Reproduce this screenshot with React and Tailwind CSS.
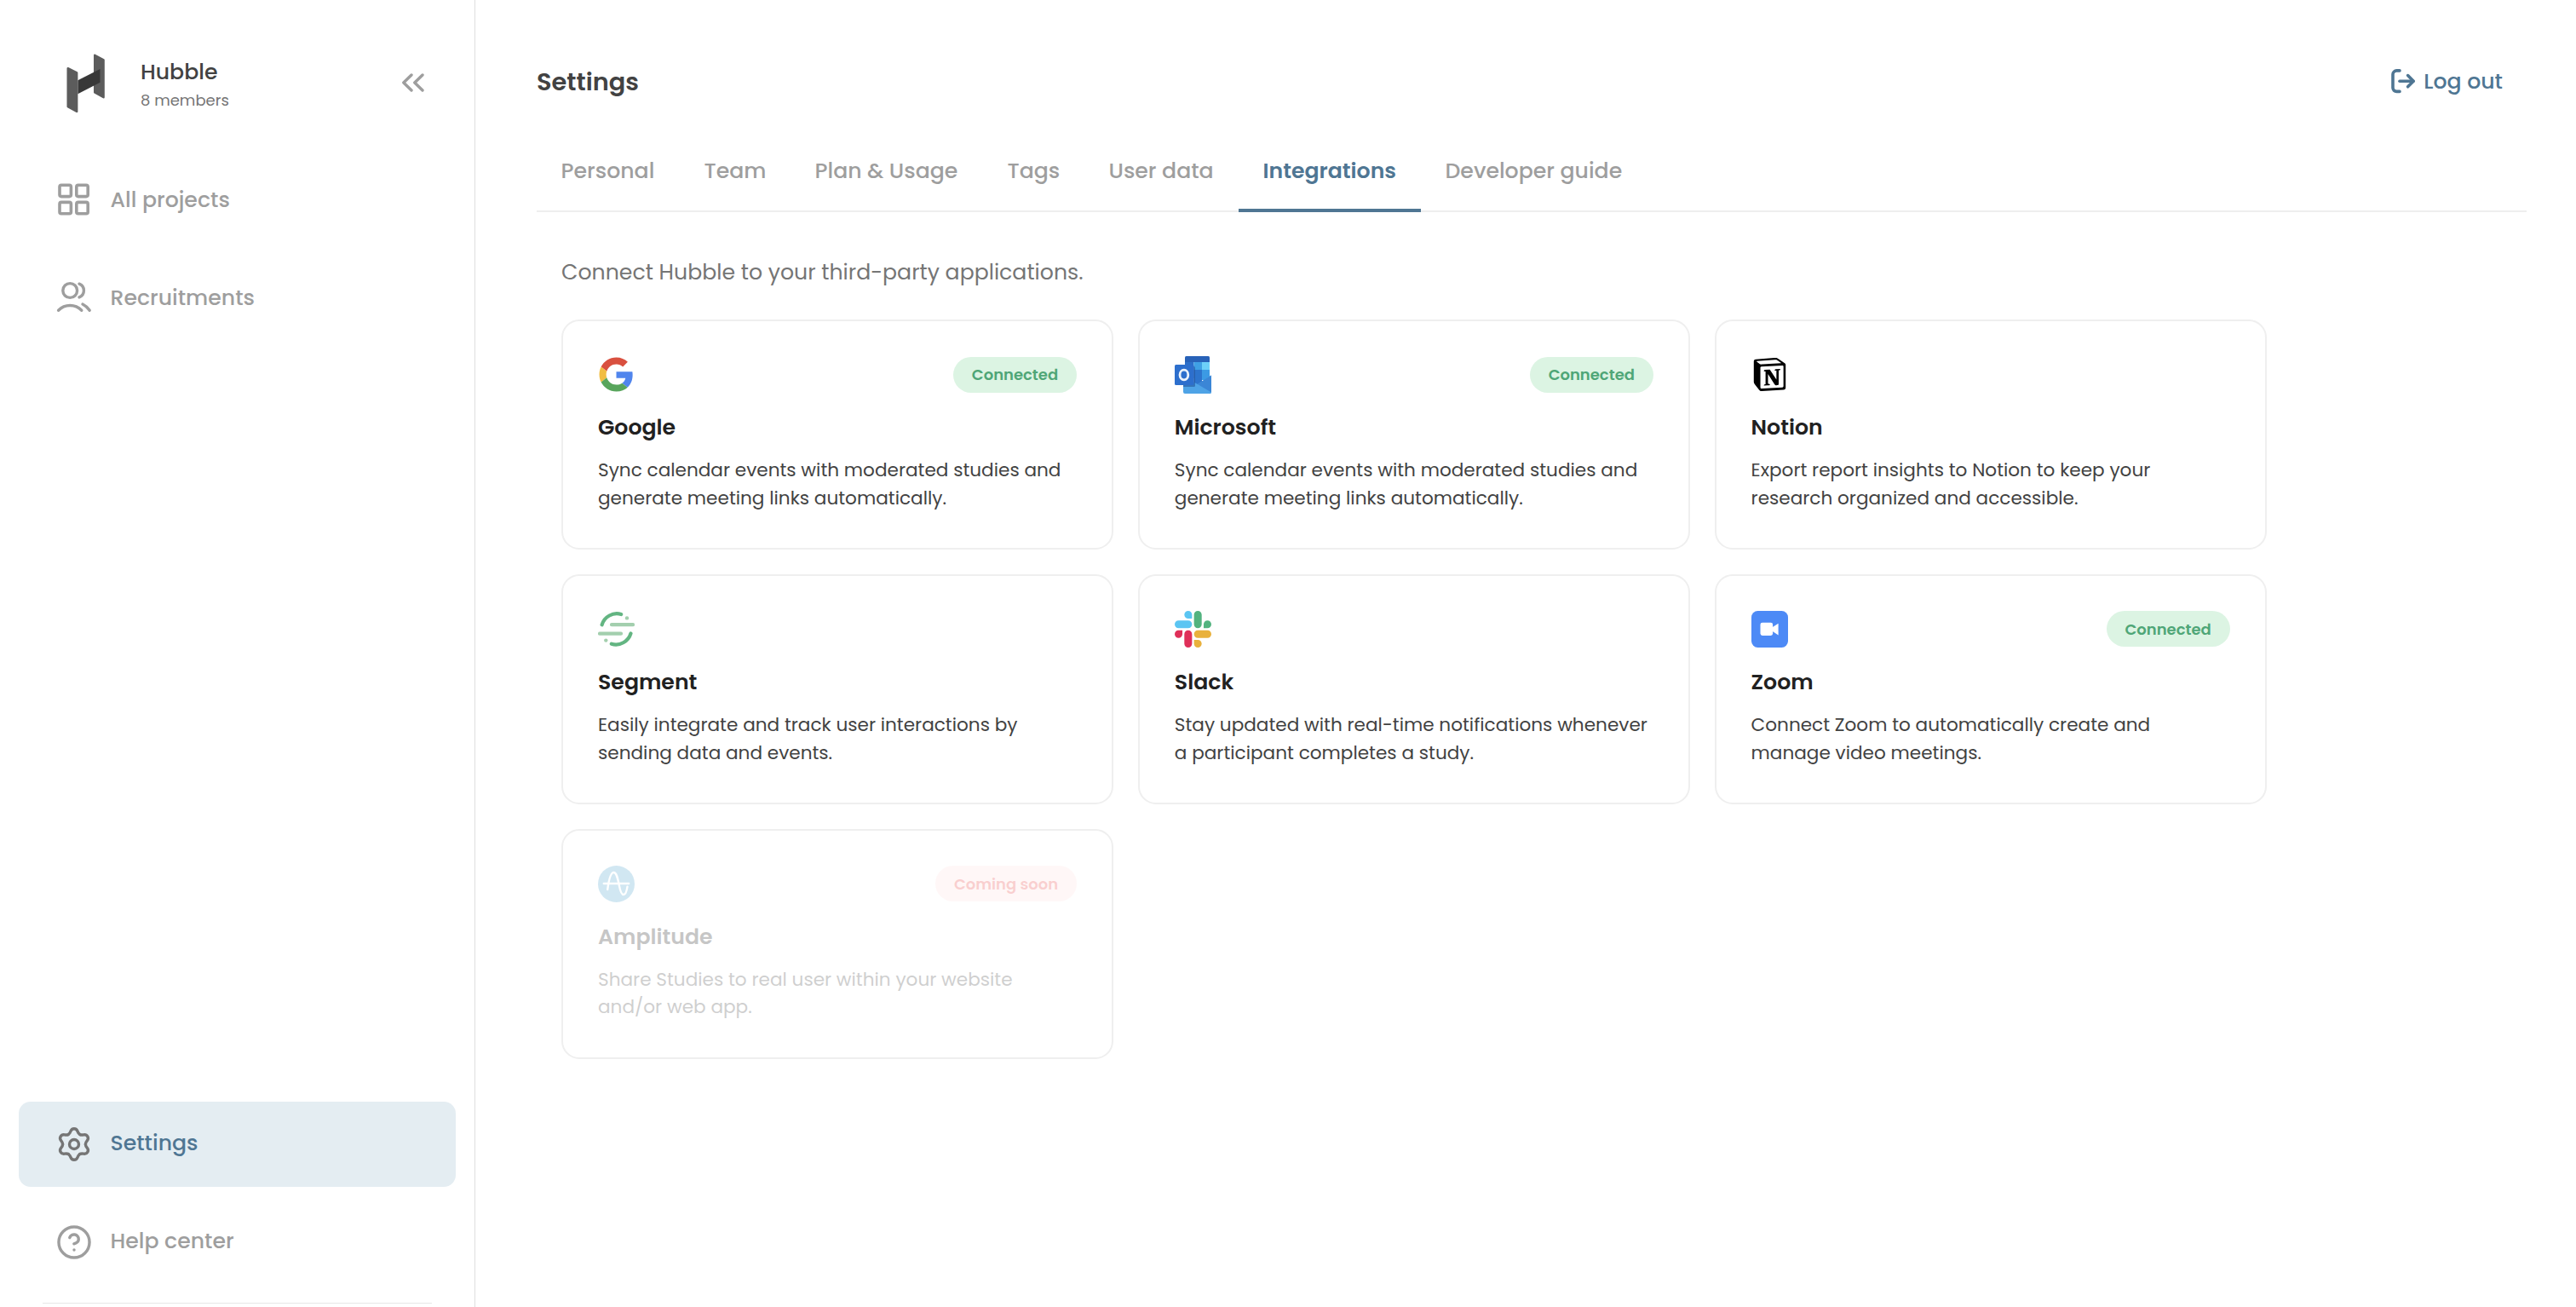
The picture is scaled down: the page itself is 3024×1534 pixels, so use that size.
import React, { useState } from "react";
import { SiNotion } from "react-icons/si";

const navItems = {
  top: [
    { name: "All projects", icon: ProjectsIcon },
    { name: "Recruitments", icon: PeopleIcon },
  ],
  bottom: [
    { name: "Settings", icon: GearIcon, active: true },
    { name: "Help center", icon: HelpIcon },
  ],
};

const tabs = [
  { name: "Personal", width: "w-[168px]" },
  { name: "Team", width: "w-[130px]" },
  { name: "Plan & Usage", width: "w-[226px]" },
  { name: "Tags", width: "w-[119px]" },
  { name: "User data", width: "w-[181px]" },
  { name: "Integrations", width: "w-[214px]" },
  { name: "Developer guide", width: "w-[266px]" },
];

const integrations = [
  {
    name: "Google",
    icon: GoogleLogo,
    status: "connected",
    text: "Sync calendar events with moderated studies and generate meeting links automatically.",
  },
  {
    name: "Microsoft",
    icon: OutlookLogo,
    status: "connected",
    text: "Sync calendar events with moderated studies and generate meeting links automatically.",
  },
  {
    name: "Notion",
    icon: NotionLogo,
    text: "Export report insights to Notion to keep your research organized and accessible.",
  },
  {
    name: "Segment",
    icon: SegmentLogo,
    text: "Easily integrate and track user interactions by sending data and events.",
  },
  {
    name: "Slack",
    icon: SlackLogo,
    text: "Stay updated with real-time notifications whenever a participant completes a study.",
  },
  {
    name: "Zoom",
    icon: ZoomLogo,
    status: "connected",
    text: "Connect Zoom to automatically create and manage video meetings.",
  },
  {
    name: "Amplitude",
    icon: AmplitudeLogo,
    status: "soon",
    text: "Share Studies to real user within your website and/or web app.",
  },
];

/* ---------- sidebar icons ---------- */

function HubbleLogo() {
  return (
    <svg width="46" height="70" viewBox="0 0 46 70" strokeLinejoin="round" strokeWidth="2.4">
      <path d="M33.2 1.7 43.6 7.2V51.2L33.2 45.4Z" fill="#5c5c5c" stroke="#5c5c5c" />
      <path d="M13.4 31.3 39.5 18V33.7L13.4 47.3Z" fill="#383838" />
      <path d="M1.7 17.2 12.2 22.4V67.9L1.7 62.2Z" fill="#5c5c5c" stroke="#5c5c5c" />
    </svg>
  );
}

function CollapseIcon() {
  return (
    <svg width="26" height="22" viewBox="0 0 26 22" fill="none" stroke="#9e9e9e" strokeWidth="3.4" strokeLinecap="round" strokeLinejoin="round">
      <path d="M11 2 1.8 11 11 20" />
      <path d="M24 2 14.8 11 24 20" />
    </svg>
  );
}

function ProjectsIcon() {
  return (
    <svg width="44" height="44" viewBox="0 0 44 44" fill="none" stroke="#9e9e9e" strokeWidth="3.6">
      <rect x="5" y="5.2" width="13.4" height="13.4" rx="2" />
      <rect x="24.8" y="5.2" width="13.4" height="13.4" rx="2" />
      <rect x="5" y="25.4" width="13.4" height="13.4" rx="2" />
      <rect x="24.8" y="25.4" width="13.4" height="13.4" rx="2" />
    </svg>
  );
}

function PeopleIcon() {
  return (
    <svg width="44" height="44" viewBox="0 0 44 44" fill="none" stroke="#9e9e9e" strokeWidth="3.4" strokeLinecap="round">
      <circle cx="17.2" cy="14" r="8.4" />
      <path d="M28 6.2a8.4 8.4 0 0 1 0 15.7" />
      <path d="M3.6 37.3a19 19 0 0 1 27.2 0" />
      <path d="M32 30a21 21 0 0 1 8.2 7.3" />
    </svg>
  );
}

function GearIcon() {
  return (
    <svg width="44" height="44" viewBox="-22 -22 44 44" fill="none" stroke="#757575" strokeWidth="3.4" strokeLinecap="round" strokeLinejoin="round">
      <circle r="5.5" />
      {[0, 60, 120, 180, 240, 300].map((deg) => (
        <path
          key={deg}
          transform={`rotate(${deg})`}
          d="M-6.7-11.6Q-5-12.6-4.1-15.2C-3.2-17.7-1.9-18.3 0-18.3S3.2-17.7 4.1-15.2Q5-12.6 6.7-11.6"
        />
      ))}
    </svg>
  );
}

function HelpIcon() {
  return (
    <svg width="44" height="44" viewBox="-0.2 -0.2 24.4 24.4" fill="none" stroke="#9e9e9e" strokeWidth="1.9" strokeLinecap="round" strokeLinejoin="round">
      <circle cx="12" cy="12" r="10" />
      <path d="M9.09 9a3 3 0 0 1 5.83 1c0 2-3 3-3 3" />
      <path d="M12 17h.01" />
    </svg>
  );
}

function LogoutIcon() {
  return (
    <svg width="29" height="29" viewBox="0 0 29 29" fill="none" stroke="#4f7693" strokeWidth="3.6" strokeLinecap="round" strokeLinejoin="round">
      <path d="M10 1.9H6.4A4.4 4.4 0 0 0 2 6.3V22a4.4 4.4 0 0 0 4.4 4.4H10" />
      <path d="M10 14.2H26" />
      <path d="M19.6 7.6 26.2 14.2 19.6 20.8" />
    </svg>
  );
}

/* ---------- integration logos ---------- */

function GoogleLogo() {
  return (
    <svg width="43" height="43" viewBox="-1.8 -1.8 51.6 51.6">
      <path fill="#d9503f" d="M24 9.5c3.54 0 6.71 1.22 9.21 3.6l6.85-6.85C35.9 2.38 30.47 0 24 0 14.62 0 6.51 5.38 2.56 13.22l7.98 6.19C12.43 13.72 17.74 9.5 24 9.5z" />
      <path fill="#5085ed" d="M46.98 24.55c0-1.57-.15-3.09-.38-4.55H24v9.02h12.94c-.58 2.96-2.26 5.48-4.78 7.18l7.73 6c4.51-4.18 7.09-10.36 7.09-17.65z" />
      <path fill="#f1bd42" d="M10.53 28.59c-.48-1.45-.76-2.99-.76-4.59s.27-3.14.76-4.59l-7.98-6.19C.92 16.46 0 20.12 0 24c0 3.88.92 7.54 2.56 10.78l7.97-6.19z" />
      <path fill="#58a55c" d="M24 48c6.48 0 11.93-2.13 15.89-5.81l-7.73-6c-2.15 1.45-4.92 2.3-8.16 2.3-6.26 0-11.57-4.22-13.47-9.91l-7.98 6.19C6.51 42.62 14.62 48 24 48z" />
    </svg>
  );
}

function OutlookLogo() {
  return (
    <svg width="43" height="44" viewBox="0 0 43 44">
      <path fill="#2862b8" d="M13.5 0h26A1.5 1.5 0 0 1 41 1.5V7H12V1.5A1.5 1.5 0 0 1 13.5 0Z" />
      <path fill="#2c6fc9" d="M12 7h10.5v19H12z" />
      <path fill="#3fa0e4" d="M22.5 7H32v9h-9.5z" />
      <path fill="#6dd0f8" d="M32 7h9v9h-9z" />
      <path fill="#2d74cd" d="M22.5 16H32v18h-9.5z" />
      <path fill="#3c9ae4" d="M32 16h9v12h-9z" />
      <path fill="#4ea3e6" d="M10 24 27 33 43 22.5V42.5A1.5 1.5 0 0 1 41.5 44H12a2 2 0 0 1-2-2Z" />
      <path fill="#3b86d6" d="M43 22.5V42.5L26.5 32.7Z" />
      <path fill="#1f4f93" opacity="0.55" d="M10 12h12.5a1.5 1.5 0 0 1 1.5 1.5V34.5a1.5 1.5 0 0 1-1.5 1.5H10z" />
      <rect y="10" width="22.5" height="24" rx="1.6" fill="#2d6fcd" />
      <ellipse cx="10.9" cy="22" rx="4.9" ry="5.8" fill="none" stroke="#eaf2fb" strokeWidth="2.8" />
    </svg>
  );
}

function NotionLogo() {
  return (
    <div className="pl-[2px]">
      <SiNotion className="size-[39px] text-black" />
    </div>
  );
}

function SegmentLogo() {
  return (
    <svg width="43" height="43" viewBox="0 0 43 43" fill="none" strokeLinecap="round" strokeWidth="4.2">
      <path d="M4.6 16.3A18.2 18.2 0 0 1 27.2 4" stroke="#63b582" />
      <path d="M38.5 26.4A18.2 18.2 0 0 1 15.8 38.7" stroke="#63b582" />
      <path d="M16 16.2H41M2 26.7H27" stroke="#a3cfae" />
      <circle cx="34" cy="8.4" r="2.2" fill="#a3cfae" />
      <circle cx="9.3" cy="34.6" r="2.2" fill="#a3cfae" />
    </svg>
  );
}

function SlackLogo() {
  return (
    <svg width="43" height="43" viewBox="0 0 122.8 122.8">
      <path fill="#df3059" d="M25.8 77.6c0 7.1-5.8 12.9-12.9 12.9S0 84.7 0 77.6s5.8-12.9 12.9-12.9h12.9v12.9zM32.3 77.6c0-7.1 5.8-12.9 12.9-12.9s12.9 5.8 12.9 12.9v32.3c0 7.1-5.8 12.9-12.9 12.9s-12.9-5.8-12.9-12.9V77.6z" />
      <path fill="#5bc5f2" d="M45.2 25.8c-7.1 0-12.9-5.8-12.9-12.9S38.1 0 45.2 0s12.9 5.8 12.9 12.9v12.9H45.2zM45.2 32.3c7.1 0 12.9 5.8 12.9 12.9s-5.8 12.9-12.9 12.9H12.9C5.8 58.1 0 52.3 0 45.2s5.8-12.9 12.9-12.9h32.3z" />
      <path fill="#52b37f" d="M97 45.2c0-7.1 5.8-12.9 12.9-12.9s12.9 5.8 12.9 12.9-5.8 12.9-12.9 12.9H97V45.2zM90.5 45.2c0 7.1-5.8 12.9-12.9 12.9s-12.9-5.8-12.9-12.9V12.9C64.7 5.8 70.5 0 77.6 0s12.9 5.8 12.9 12.9v32.3z" />
      <path fill="#e9b13c" d="M77.6 97c7.1 0 12.9 5.8 12.9 12.9s-5.8 12.9-12.9 12.9-12.9-5.8-12.9-12.9V97h12.9zM77.6 90.5c-7.1 0-12.9-5.8-12.9-12.9s5.8-12.9 12.9-12.9h32.3c7.1 0 12.9 5.8 12.9 12.9s-5.8 12.9-12.9 12.9H77.6z" />
    </svg>
  );
}

function ZoomLogo() {
  return (
    <svg width="43" height="43" viewBox="0 0 43 43">
      <rect width="43" height="43" rx="7.5" fill="#4d8af6" />
      <rect x="10.5" y="13.7" width="14.6" height="15.3" rx="2.4" fill="white" />
      <path d="M24.5 19.3 31.6 14.7V28.4L24.5 23.7Z" fill="white" />
    </svg>
  );
}

function AmplitudeLogo() {
  return (
    <svg width="43" height="43" viewBox="0 0 43 43" fill="none" stroke="white" strokeWidth="2.4" strokeLinecap="round">
      <circle cx="21.5" cy="21.5" r="21.5" fill="#4ba3cf" stroke="none" />
      <path d="M6.8 21H36.2" />
      <path d="M11.2 28C12.4 19 14.8 8 18.4 8C22.3 8 23.5 17 25 24C26 29 27.5 34 30 34C32.4 34 33.9 28.5 34.5 24.6" />
    </svg>
  );
}

/* ---------- pieces ---------- */

function NavItem({ item, labelClass = "" }) {
  const Icon = item.icon;
  return (
    <button
      className={`flex items-center gap-[20.5px] h-[100px] w-full pl-[43px] rounded-[14px] text-[25.2px] font-medium ${
        item.active ? "bg-[#e4edf2] text-[#4f7693]" : "text-[#9e9e9e]"
      }`}
    >
      <Icon />
      <span className={`whitespace-nowrap ${labelClass}`}>{item.name}</span>
    </button>
  );
}

function StatusBadge({ status }) {
  if (!status) return null;
  const connected = status === "connected";
  return (
    <span
      className={`flex items-center justify-center h-[42px] rounded-full text-[18px] font-semibold ${
        connected
          ? "w-[145px] bg-[#dcf4e3] text-[#4fa677]"
          : "w-[166px] bg-[#ffe2e2] text-[#eb4545]"
      }`}
    >
      {connected ? "Connected" : "Coming soon"}
    </span>
  );
}

function IntegrationCard({ item }) {
  const Logo = item.icon;
  return (
    <div className="h-[270px] rounded-[21px] border-2 border-[#efefef] p-[41px]">
      <div className={item.status === "soon" ? "opacity-25" : ""}>
        <div className="flex items-center justify-between h-[43px]">
          <Logo />
          <StatusBadge status={item.status} />
        </div>
        <h2 className="mt-[22px] text-[25.2px] leading-[38px] font-semibold text-[#212121]">
          {item.name}
        </h2>
        <p className="mt-[15.4px] text-[21.6px] leading-[32.4px] text-[#424242]">
          {item.text}
        </p>
      </div>
    </div>
  );
}

export default function App() {
  const [activeTab, setActiveTab] = useState("Integrations");

  return (
    <div className="flex h-screen overflow-hidden bg-white font-['Poppins','Inter',sans-serif]">
      {/* Sidebar */}
      <aside className="flex flex-col shrink-0 w-[558px] px-[22px] border-r border-[#dedede]">
        <div className="flex items-start pt-[63px] pl-[56px] pr-[37px] h-[184px]">
          <HubbleLogo />
          <div className="pl-[41px] pt-[3px]">
            <h1 className="text-[25.2px] leading-[38px] font-medium text-[#424242]">Hubble</h1>
            <p className="text-[18px] leading-[27px] text-[#757575]">8 members</p>
          </div>
          <button className="ml-auto mt-[23px]">
            <CollapseIcon />
          </button>
        </div>

        <nav className="flex flex-col gap-[15px]">
          {navItems.top.map((item) => (
            <NavItem key={item.name} item={item} labelClass="pt-px" />
          ))}
        </nav>

        <nav className="flex flex-col gap-[15px] mt-auto">
          {navItems.bottom.map((item) => (
            <NavItem key={item.name} item={item} labelClass="pb-0.5" />
          ))}
        </nav>
        <div className="mt-[21px] mb-[4px] mx-[28px] border-t border-[#e6e6e6]" />
      </aside>

      {/* Content */}
      <main className="flex-1 pl-[72px] pr-[58px] pt-[74px]">
        <header className="flex items-center justify-between h-[44px] pr-[28px]">
          <h1 className="pt-0.5 text-[28.8px] font-semibold text-[#424242]">Settings</h1>
          <button className="flex items-center gap-[9px] text-[25.2px] font-medium text-[#4f7693]">
            <LogoutIcon />
            <span>Log out</span>
          </button>
        </header>

        <div className="flex h-[90px] mt-[41px] border-b-2 border-[#eeeeee]">
          {tabs.map((tab) => (
            <button
              key={tab.name}
              onClick={() => setActiveTab(tab.name)}
              className={`flex h-[90px] pt-[23px] pl-[28.5px] text-[25.2px] leading-[38px] whitespace-nowrap border-b-4 ${tab.width} ${
                activeTab === tab.name
                  ? "font-semibold text-[#4f7693] border-[#4f7693]"
                  : "font-medium text-[#9e9e9e] border-transparent"
              }`}
            >
              {tab.name}
            </button>
          ))}
        </div>

        <div className="pl-[29px] pt-[52px]">
          <p className="text-[25.2px] leading-[38px] text-[#757575]">
            Connect Hubble to your third-party applications.
          </p>
          <div className="grid grid-cols-[repeat(3,648px)] gap-[28.8px] mt-[36px]">
            {integrations.map((item) => (
              <IntegrationCard key={item.name} item={item} />
            ))}
          </div>
        </div>
      </main>
    </div>
  );
}
